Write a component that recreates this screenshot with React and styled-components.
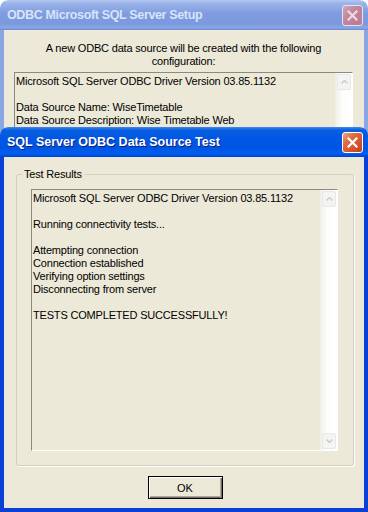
import styled, { createGlobalStyle } from 'styled-components'

const GlobalStyle = createGlobalStyle`
  html, body {
    margin: 0;
    padding: 0;
    background: #ffffff;
  }
  body {
    font-family: "Liberation Sans", Arial, sans-serif;
    font-size: 11px;
    letter-spacing: -0.18px;
    color: #000;
  }
`

const setupLines = [
  'Microsoft SQL Server ODBC Driver Version 03.85.1132',
  '',
  'Data Source Name: WiseTimetable',
  'Data Source Description: Wise Timetable Web',
]

const testLines = [
  'Microsoft SQL Server ODBC Driver Version 03.85.1132',
  '',
  'Running connectivity tests...',
  '',
  'Attempting connection',
  'Connection established',
  'Verifying option settings',
  'Disconnecting from server',
  '',
  'TESTS COMPLETED SUCCESSFULLY!',
]

function CloseIcon() {
  return (
    <svg width="11" height="11" viewBox="0 0 11 11">
      <path d="M1.5 1.5 L9.5 9.5 M9.5 1.5 L1.5 9.5" stroke="currentColor" strokeWidth="2.2" strokeLinecap="square" />
    </svg>
  )
}

function Chevron({ down }) {
  return (
    <svg width="7" height="4" viewBox="0 0 7 4">
      <path d={down ? 'M0.5 0.5 L3.5 3.5 L6.5 0.5' : 'M0.5 3.5 L3.5 0.5 L6.5 3.5'} stroke="#c3c9d4" strokeWidth="1.3" fill="none" />
    </svg>
  )
}

function ScrollBar() {
  return (
    <SCScrollBar>
      <SCArrowBox><Chevron /></SCArrowBox>
      <SCArrowBox><Chevron down /></SCArrowBox>
    </SCScrollBar>
  )
}

function TextLines({ lines }) {
  return (
    <SCLines>
      {lines.map((l, i) => (
        <SCLine key={i}>{l || '\u00a0'}</SCLine>
      ))}
    </SCLines>
  )
}

function App() {
  return (
    <>
      <GlobalStyle />
      <SCDesktop>
        <SCWindow $top={0} $height={560}>
          <SCTitleBar>
            <SCTitle $spacing={-0.35}>ODBC Microsoft SQL Server Setup</SCTitle>
            <SCCloseButton><CloseIcon /></SCCloseButton>
          </SCTitleBar>
          <SCFrame>
            <SCSetupBody>
              <SCIntro>
                A new ODBC data source will be created with the following configuration:
              </SCIntro>
              <SCTextBox $height={140}>
                <TextLines lines={setupLines} />
                <ScrollBar />
              </SCTextBox>
            </SCSetupBody>
          </SCFrame>
        </SCWindow>

        <SCWindow $top={127} $height={385} $active>
          <SCTitleBar $active>
            <SCTitle $active $spacing={0}>SQL Server ODBC Data Source Test</SCTitle>
            <SCCloseButton $active><CloseIcon /></SCCloseButton>
          </SCTitleBar>
          <SCFrame $active>
            <SCTestBody>
              <SCGroupBox>
                <SCLegend>Test Results</SCLegend>
                <SCTextBox $height={262}>
                  <TextLines lines={testLines} />
                  <ScrollBar />
                </SCTextBox>
              </SCGroupBox>
              <SCButtonRow>
                <SCButton>OK</SCButton>
              </SCButtonRow>
            </SCTestBody>
          </SCFrame>
        </SCWindow>
      </SCDesktop>
    </>
  )
}

const SCDesktop = styled.div`
  position: relative;
  width: 368px;
  height: 512px;
  overflow: hidden;
`

const SCWindow = styled.div`
  position: absolute;
  left: 0;
  top: ${(p) => p.$top}px;
  width: 368px;
  height: ${(p) => p.$height}px;
  display: flex;
  flex-direction: column;
  border-radius: 8px 8px 0 0;
  overflow: hidden;
`

const SCTitleBar = styled.div`
  flex: 0 0 auto;
  height: 30px;
  display: flex;
  align-items: center;
  justify-content: space-between;
  padding: 0 5px 0 7px;
  box-sizing: border-box;
  border-radius: 8px 8px 0 0;
  background: ${(p) =>
    p.$active
      ? 'linear-gradient(to bottom, #3c8cf3 0%, #0a5fdc 10%, #0058e6 35%, #0054e3 70%, #0060f0 88%, #0044d0 100%)'
      : 'linear-gradient(to bottom, #b3c8f0 0%, #9ab3e8 12%, #7f9ce0 45%, #7c99df 80%, #8aa6e4 92%, #7089d4 100%)'};
`

const SCTitle = styled.span`
  font-family: "Liberation Sans", Arial, sans-serif;
  font-weight: bold;
  font-size: 12.5px;
  letter-spacing: ${(p) => p.$spacing}px;
  color: ${(p) => (p.$active ? '#ffffff' : '#d8e4f8')};
  text-shadow: ${(p) => (p.$active ? '1px 1px 0 #0a1e80' : 'none')};
  white-space: nowrap;
`

const SCCloseButton = styled.div`
  width: 21px;
  height: 21px;
  box-sizing: border-box;
  border: 1px solid ${(p) => (p.$active ? '#ffffff' : '#dfe6f6')};
  border-radius: 3px;
  display: flex;
  align-items: center;
  justify-content: center;
  color: ${(p) => (p.$active ? '#ffffff' : '#ecdbe4')};
  background: ${(p) =>
    p.$active
      ? 'linear-gradient(135deg, #f0a07f 0%, #e16a42 35%, #d34e26 75%, #c4401c 100%)'
      : 'linear-gradient(135deg, #d3a5b8 0%, #c4869c 40%, #b97b93 100%)'};
  margin-top: 1px;
`

const SCFrame = styled.div`
  flex: 1 1 auto;
  display: flex;
  flex-direction: column;
  border: 4px solid ${(p) => (p.$active ? '#0a3fd8' : '#8aa6e4')};
  border-top: none;
  box-shadow: ${(p) => (p.$active ? 'inset 1px 0 0 #1664ec, inset -1px 0 0 #1664ec' : 'none')};
  background: #ece9d8;
`

const SCSetupBody = styled.div`
  flex: 1 1 auto;
  background: #ece9d8;
  padding: 12px 11px 0 10px;
`

const SCIntro = styled.div`
  text-align: center;
  line-height: 13px;
  padding: 0 22px;
  margin-bottom: 4px;
`

const SCTestBody = styled.div`
  flex: 1 1 auto;
  display: flex;
  flex-direction: column;
  background: #ece9d8;
  padding: 11px 10px 0 12px;
`

const SCGroupBox = styled.fieldset`
  margin: 0;
  padding: 8px 15px 14px 14px;
  border: 1px solid #d0d0bf;
  border-radius: 3px;
  box-shadow: 1px 1px 0 #ffffff;
`

const SCLegend = styled.legend`
  padding: 0 2px;
  margin-left: -9px;
  line-height: 13px;
  font-size: 11px;
`

const SCTextBox = styled.div`
  height: ${(p) => p.$height}px;
  box-sizing: border-box;
  display: flex;
  border-top: 1px solid #8c8a7e;
  border-left: 1px solid #8c8a7e;
  border-bottom: 1px solid #ffffff;
  border-right: 1px solid #ffffff;
  background: #ece9d8;
`

const SCLines = styled.div`
  flex: 1 1 auto;
  padding: 2px 2px 0 1px;
  overflow: hidden;
`

const SCLine = styled.div`
  line-height: 13px;
  white-space: nowrap;
`

const SCScrollBar = styled.div`
  flex: 0 0 17px;
  display: flex;
  flex-direction: column;
  justify-content: space-between;
  padding: 1px 0;
  box-sizing: border-box;
  background: linear-gradient(to right, #f3f1ea 0%, #fdfdfb 40%, #ffffff 100%);
  border-left: 1px solid #f0eee6;
`

const SCArrowBox = styled.div`
  width: 14px;
  height: 16px;
  margin-left: 1px;
  box-sizing: border-box;
  border: 1px solid #e6e8ed;
  border-radius: 2px;
  background: #f4f4f0;
  display: flex;
  align-items: center;
  justify-content: center;
`

const SCButtonRow = styled.div`
  display: flex;
  justify-content: center;
  padding-top: 10px;
`

const SCButton = styled.button`
  width: 75px;
  height: 23px;
  box-sizing: border-box;
  padding: 0;
  font-family: "Liberation Sans", Arial, sans-serif;
  font-size: 11px;
  color: #000;
  border: 1px solid #000000;
  background: #ece9d8;
  box-shadow: inset 1px 1px 0 #ffffff, inset -1px -1px 0 #716f64, inset -2px -2px 0 #aca899;
`

export default App
